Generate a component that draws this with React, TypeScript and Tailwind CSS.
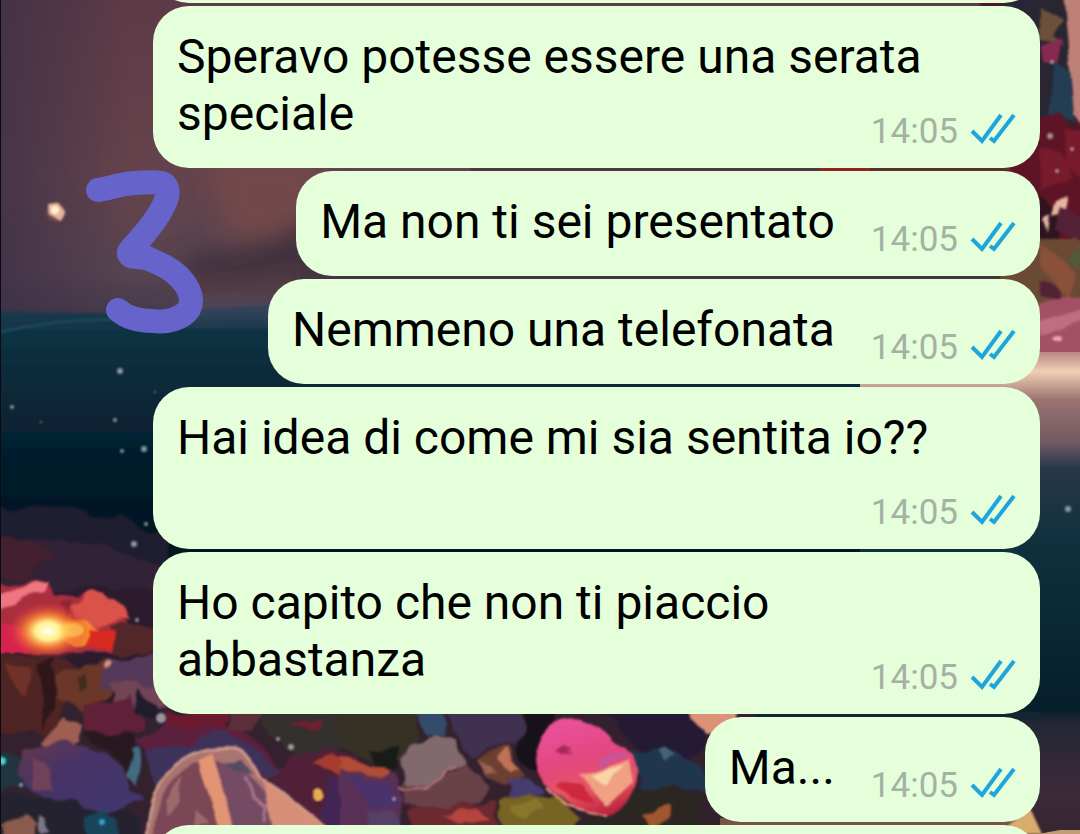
type Message = {
  id: number;
  text: string;
  time: string;
};

const messages: Message[] = [
  { id: 1, text: 'Speravo potesse essere una serata speciale', time: '14:05' },
  { id: 2, text: 'Ma non ti sei presentato', time: '14:05' },
  { id: 3, text: 'Nemmeno una telefonata', time: '14:05' },
  { id: 4, text: 'Hai idea di come mi sia sentita io??', time: '14:05' },
  { id: 5, text: 'Ho capito che non ti piaccio abbastanza', time: '14:05' },
  { id: 6, text: 'Ma...', time: '14:05' },
];

const sparkles = [
  [120, 371, 3], [12, 407, 2], [41, 422, 1], [115, 420, 2], [122, 451, 2], [144, 449, 3],
  [155, 392, 1], [146, 524, 2], [134, 544, 3], [161, 718, 5], [291, 747, 3], [278, 739, 2],
  [1050, 136, 3], [1072, 149, 2], [1057, 171, 2], [1052, 62, 2], [1068, 509, 3], [137, 620, 2],
  [21, 785, 2], [394, 799, 2],
];

function Wallpaper() {
  return (
    <svg
      className="absolute inset-0 h-full w-full"
      viewBox="0 0 1080 834"
      preserveAspectRatio="xMidYMid slice"
      aria-hidden="true"
    >
      <defs>
        <linearGradient id="sky" x1="0" y1="0" x2="0" y2="1">
          <stop offset="0" stopColor="#5e3a46" />
          <stop offset="0.55" stopColor="#65434c" />
          <stop offset="0.85" stopColor="#574450" />
          <stop offset="1" stopColor="#43394a" />
        </linearGradient>
        <linearGradient id="skyShade" x1="0" y1="0" x2="1" y2="0">
          <stop offset="0" stopColor="#3c2f45" stopOpacity="0.75" />
          <stop offset="1" stopColor="#3c2f45" stopOpacity="0" />
        </linearGradient>
        <linearGradient id="sea" x1="0" y1="0" x2="0" y2="1">
          <stop offset="0" stopColor="#203c50" />
          <stop offset="0.12" stopColor="#0c3142" />
          <stop offset="0.5" stopColor="#06202f" />
          <stop offset="1" stopColor="#030f1b" />
        </linearGradient>
        <linearGradient id="shore" x1="0" y1="0" x2="0" y2="1">
          <stop offset="0" stopColor="#b98684" />
          <stop offset="0.04" stopColor="#f0d0b4" />
          <stop offset="0.1" stopColor="#9a7370" />
          <stop offset="0.19" stopColor="#705862" />
          <stop offset="0.24" stopColor="#26384a" />
          <stop offset="0.4" stopColor="#10303e" />
          <stop offset="0.74" stopColor="#051f2b" />
          <stop offset="0.77" stopColor="#252735" />
          <stop offset="0.92" stopColor="#3c2a38" />
          <stop offset="1" stopColor="#352630" />
        </linearGradient>
        <radialGradient id="fire">
          <stop offset="0" stopColor="#fffff0" />
          <stop offset="0.3" stopColor="#fff28c" />
          <stop offset="0.55" stopColor="#ff8a35" stopOpacity="0.8" />
          <stop offset="1" stopColor="#d9203c" stopOpacity="0" />
        </radialGradient>
        <linearGradient id="gem" x1="0.3" y1="0" x2="0.6" y2="1">
          <stop offset="0" stopColor="#ea529b" />
          <stop offset="0.45" stopColor="#e3477f" />
          <stop offset="0.75" stopColor="#e85561" />
          <stop offset="1" stopColor="#be2540" />
        </linearGradient>
        <linearGradient id="leaf" x1="0" y1="0" x2="1" y2="1">
          <stop offset="0" stopColor="#65384d" />
          <stop offset="0.4" stopColor="#473366" />
          <stop offset="1" stopColor="#403870" />
        </linearGradient>
        <filter id="soft" x="-20%" y="-20%" width="140%" height="140%">
          <feGaussianBlur stdDeviation="1" />
        </filter>
        {/* uneven, painted edges */}
        <filter id="rough" x="-5%" y="-5%" width="110%" height="110%" colorInterpolationFilters="sRGB">
          <feTurbulence type="fractalNoise" baseFrequency="0.035" numOctaves="2" seed="4" result="noise" />
          <feDisplacementMap in="SourceGraphic" in2="noise" scale="20" xChannelSelector="R" yChannelSelector="G" />
          <feGaussianBlur stdDeviation="1" />
        </filter>
        <filter id="paint" x="-5%" y="-5%" width="110%" height="110%" colorInterpolationFilters="sRGB">
          <feTurbulence type="fractalNoise" baseFrequency="0.04" numOctaves="1" seed="9" result="noise" />
          <feDisplacementMap in="SourceGraphic" in2="noise" scale="8" xChannelSelector="R" yChannelSelector="G" />
          <feGaussianBlur stdDeviation="1" />
        </filter>
        <filter id="haze" x="-30%" y="-60%" width="160%" height="220%">
          <feGaussianBlur stdDeviation="12" />
        </filter>
      </defs>

      {/* sky and sea */}
      <rect width="1080" height="834" fill="#0a1d2b" />
      <rect width="1080" height="320" fill="url(#sky)" />
      <rect width="130" height="320" fill="url(#skyShade)" />
      <g filter="url(#haze)">
        <path d="M210 160h110v70l-90 10z" fill="#724a4c" />
        <path d="M180 256q50-6 90-16l50-26v86l-130 2z" fill="#3f323d" />
        <path d="M190 282q50 8 110-8v14q-60 14-110 8z" fill="#634349" />
      </g>
      <path d="M0 311q60 2 100 2t180-8h800v280H0z" fill="url(#sea)" filter="url(#soft)" />
      <path d="M170 306q60-8 130 0v12q-60-6-130 0z" fill="#50506a" filter="url(#haze)" />
      <path d="M0 332q60-14 120-12" fill="none" stroke="#1e4658" strokeWidth="3" filter="url(#soft)" />

      {/* right side */}
      <g filter="url(#paint)">
        <rect x="980" y="-10" width="110" height="370" fill="#4a1826" />
        <path d="M1006-8h60l8 133h-34l-40-90z" fill="#2a2532" />
        <path d="M1055 60l14 10 6 52-26-6z" fill="#233d54" />
        <path d="M1040 6l22 14-10 16 12 8-24-4z" fill="#6c5039" />
        <path d="M1042 46l18-8-2 24-14 2z" fill="#8a2950" />
        <path d="M1063-8h27v148l-16-26z" fill="#bd8177" />
        <path d="M1040 118l20-4 20 26h10v100h-70l-20-75z" fill="#5d1525" />
        <path d="M1040 150q28-8 32 28l-32 12zM1064 130l26-2v60l-22-22z" fill="#781b2c" />
        <path d="M1040 196l16 14 2 30-18 8z" fill="#2e1420" />
        <path d="M1056 200l12-4-4 16-12 4zM1044 218l6-4-2 18z" fill="#e4b4a0" />
        <path d="M1000 238h90v66l-50 8-40-30z" fill="#6b4a34" />
        <path d="M1042 244l34 30-6 26-30-34z" fill="#8a5039" />
        <path d="M1042 280q22 4 20 20l-22-4zM1060 206l30 14v24l-36-14z" fill="#542236" />
        <path d="M1066 262l14-16v26z" fill="#4f5b39" />
        <path d="M1030 306q26-10 60-8v66l-60-6z" fill="#a35064" />
        <path d="M1040 322l50-16v10l-50 20z" fill="#bf6d82" />
        <ellipse cx="1058" cy="338" rx="6" ry="3" fill="#f5a4ac" />
      </g>
      <rect x="860" y="352" width="220" height="482" fill="url(#shore)" />

      {/* gaps between the upper bubbles */}
      <path d="M470 163h540v12H470z" fill="#4c3a40" />
      <path d="M820 166h50v10h-50z" fill="#92241f" />
      <path d="M870 166h140v10H870z" fill="#5a302e" />
      <path d="M300 270h700v14H300z" fill="#443541" />

      {/* dark shore, left */}
      <g filter="url(#rough)">
        <path d="M-20 512q90-14 190 22v60H-20z" fill="#1f1d30" />
        <path d="M-20 538q110-6 190 34v60H-20z" fill="#322238" />
        <path d="M-20 536q60 0 74 20l-30 24-44-6z" fill="#43202d" />
        <path d="M-20 590h190v244H-20z" fill="#2c1b2c" />
        <path d="M-20 592l66-14 10 16 56 4 22 34-20 22H-20z" fill="#a92f3f" />
        <path d="M-20 600l68-22-4 12-64 26z" fill="#ef7680" />
        <path d="M66 608l24-14 26 6 14 18-42 8z" fill="#db5348" />
        <path d="M56 606l14-8-4 24z" fill="#8f2433" />
        <path d="M-20 622l50 10-4 22h-46z" fill="#d6234e" />
        <path d="M112 624h52v30h-54z" fill="#532629" />
        <ellipse cx="76" cy="634" rx="26" ry="14" fill="#f6922f" />
        <path d="M90 626l24 4-4 18-24 2z" fill="#d92a21" />
      </g>
      <ellipse cx="48" cy="631" rx="42" ry="30" fill="url(#fire)" />
      <ellipse cx="72" cy="630" rx="12" ry="7" fill="#ffd35a" fillOpacity="0.6" filter="url(#soft)" />

      {/* rocks and petals */}
      <g filter="url(#rough)">
        <rect x="-20" y="706" width="900" height="150" fill="#33212e" />
        <path d="M-20 654l80 4 28 14-36 58-72 4z" fill="#4f2424" />
        <path d="M4 666l34 6-16 22z" fill="#703129" />
        <path d="M44 664l12-6v50l-14 18z" fill="#2f1619" />
        <path d="M56 676l24-14 32 2 4 24-34 26-26-16z" fill="#6a3729" />
        <path d="M72 678l12-8 4 18-10 8z" fill="#3f2c1c" />
        <path d="M104 662l60-8 10 50-38 6-36-26z" fill="#56395a" />
        <path d="M110 680l44 8 16 20-60-6z" fill="#724454" />
        <ellipse cx="108" cy="667" rx="5" ry="3" fill="#cf987e" />
        <path d="M84 706l50-8 12 30-48 14-16-16z" fill="#602138" />
        <path d="M140 690l14 12 4 18-18-6z" fill="#211c2d" />
        <path d="M48 728l18-12 15 8-3 18-16 8-22-8z" fill="#9c5f52" />
        <path d="M82 732l50 4 6 36-44-30z" fill="#27191f" />
        <path d="M-20 744l50 20v20l-50 6z" fill="#203540" />
        <path d="M-20 790l90 6 70 18v40H-20z" fill="#25222f" />
        <path d="M24 752l26-12 40 6 32 18 22 36-30 14-58-14-38-24z" fill="url(#leaf)" />
        <path d="M34 758l12 6 8 26-20-6z" fill="#704259" />
        <path d="M2 824l20-10 16 10v30H2z" fill="#8a5b4c" />
        <path d="M38 812l10 6 4 16-10 2z" fill="#7a7584" />
        <path d="M84 814l20-6 14 16-6 30H84z" fill="#19455a" />
        <path d="M134 740l52-22 60 12 36 38-42 26-80-20z" fill="#5c203f" />
        <path d="M144 756l84-26 66 48-74-10-60 24z" fill="#3e325b" />
        <path d="M130 754l8-6 2 34-12-8z" fill="#426c82" />
        <path d="M164 712h68l-6 18-60-4z" fill="#6b192d" />
        <path d="M232 708h36l-12 24-24-4z" fill="#5b3039" />
        <path d="M262 704h98v42l-52 10-40-20z" fill="#34302e" />
        <path d="M286 718l32 2-6 14z" fill="#701f30" />
        <path d="M270 774l40-28 48 10 2 80-60-10z" fill="#502038" />
        <path d="M316 762l16-8 28 16-4 12-24-8z" fill="#a73b30" />
        <path d="M326 782q26-10 30 8l-6 36-30-10z" fill="#422554" />
      </g>
      <ellipse cx="318" cy="794" rx="6" ry="7" fill="#e6ad50" filter="url(#paint)" />

      {/* big shell */}
      <g filter="url(#paint)">
        <path d="M147 840q2-62 36-80 22-14 52-11 14 4 26 30 30 18 72 55v8z" fill="#a97370" />
        <path d="M154 840q0-52 36-74l12-4 18 26 10 54z" fill="#7b4655" />
        <path d="M166 800l16-24-2 26-14 14zM196 808l14 14-16 4z" fill="#9d6a6c" />
        <path d="M197 763l16-10 12 32 12 57h-14z" fill="#e39474" />
        <path d="M216 760l24 4 24 28 12 50h-38z" fill="#744b63" />
        <path d="M224 764l16-4 14 14-20-4z" fill="#534c63" />
        <path d="M244 776l10 22 12 8-2 16" fill="none" stroke="#a97688" strokeWidth="3" />
        <path d="M263 782q28 14 68 52l-56 4z" fill="#d88f78" />
        <path d="M147 840q2-62 36-80 22-14 52-11 14 4 26 30 30 18 72 55" fill="none" stroke="#cf9a88" strokeWidth="3" />
      </g>

      {/* pebbles along the bottom */}
      <g filter="url(#rough)">
        <path d="M340 706h72l8 48-36 12-44-20z" fill="#363125" />
        <path d="M410 706h36l6 30-26-2z" fill="#344c69" />
        <path d="M446 704h86l-16 40-50 10z" fill="#413150" />
        <path d="M372 750l28-6-2 24-22 2z" fill="#191b17" />
        <path d="M340 762l52 10 14 28-16 44h-50z" fill="#5a3057" />
        <path d="M336 756l50 14-8 6-42-8z" fill="#b24c36" />
        <path d="M354 776l34 6 12 24-34 4z" fill="#4b326b" />
        <path d="M402 758l12-14 24-10 18 6 4 24-20 22-24 4-10-8z" fill="#82696e" />
        <path d="M404 782q38 14 56-18l20 12 12 18-42 18-42-8z" fill="#684149" />
        <path d="M400 788q40 8 56-22" fill="none" stroke="#b7777c" strokeWidth="2" />
        <path d="M474 754l36-6 16 24-24 18-18-14z" fill="#6d3e32" />
        <path d="M496 758l10-8 16 18-12 4z" fill="#bf7354" />
        <path d="M472 756l20 10 8 10-14-2z" fill="#9b6153" />
        <path d="M504 782l22-6 18 16-34 8z" fill="#453d70" />
        <path d="M410 808l88-6 2 44h-92z" fill="#6b2930" />
        <path d="M440 816l36-8 18 12-34 4z" fill="#b4443d" />
        <path d="M370 812l26-2 10 36h-44z" fill="#564066" />
        <path d="M502 802l24-8 34 4 20 16-16 30h-64z" fill="#776323" />
        <path d="M512 804l24-6 8 14-22 6z" fill="#8a752c" />
        <path d="M524 706h34l-14 40v36l-24-30z" fill="#171219" />
        <path d="M592 706h92l24 28-14 26-52-10z" fill="#251a34" />
        <path d="M628 748l44 6 46 16-6 18-72 4z" fill="#20364d" />
        <path d="M656 754l8-4 14 10-14 6z" fill="#456378" />
        <path d="M686 706h50v26l-32 2z" fill="#dc9277" />
        <path d="M634 786l84 8v50H580l12-30z" fill="#2c2622" />
        <path d="M642 816l32-8-4 14-20 8z" fill="#a0562f" />
        <path d="M706 736l12 8v84h-18z" fill="#33202b" />
      </g>

      {/* pink gem */}
      <g filter="url(#paint)">
        <path d="M534 758q6-40 38-40 22 0 42 24 24 8 22 36-4 30-28 36-22 2-46-16-28-16-28-40z" fill="url(#gem)" />
        <path d="M578 774q24 0 50-14l4 22-26 24-16-18z" fill="#f0a083" />
        <path d="M590 776l34-10-18 22z" fill="#f9d5a5" />
        <path d="M562 782l18 2 16 18-24-4-16-12z" fill="#ce283f" />
        <path d="M556 752l8-6 8 4-6 2 8 2-12 2z" fill="#a5285b" />
        <path d="M602 756l20-4 6 6-18 4-4 8-6-2z" fill="#c85498" />
        <path d="M546 788l18 16 26 8 18 2" fill="none" stroke="#f0988c" strokeWidth="2" />
      </g>

      {/* sand at the bottom right */}
      <path d="M756 712h284v8H756z" fill="#142431" />
      <path d="M720 818h300v10H720z" fill="#765348" />
      <path d="M1010 824l20-16 12 26h-40z" fill="#d8ac6c" filter="url(#soft)" />
      <path d="M1038 834l22-4h20v4z" fill="#c39b75" />

      {/* small lights */}
      <g filter="url(#soft)">
        <circle cx="56" cy="212" r="10" fill="#6e4848" />
        <path d="M48 204l10-1 7 9-4 9-12-7z" fill="#e6b39b" />
        <circle cx="55" cy="210" r="4" fill="#fff0d7" />
        {sparkles.map(([x, y, r]) => (
          <circle key={`${x}-${y}`} cx={x} cy={y} r={r} fill="#b9bcc4" fillOpacity="0.75" />
        ))}
        <circle cx="2" cy="761" r="4" fill="#42d2cf" />
        <circle cx="102" cy="822" r="3" fill="#37a2cb" />
      </g>
      <rect width="1" height="834" fill="#0b0a10" />
    </svg>
  );
}

// number drawn by hand over the chat
function HandwrittenThree() {
  return (
    <svg
      className="absolute top-[168px] left-[82px] h-[170px] w-[126px]"
      viewBox="82 168 126 170"
      role="img"
      aria-label="3"
    >
      <path
        d="M98 190C108 189 119 184 134 183C146 182 155 182 161 183C168 184 169 193 166 200C160 217 144 235 132 248C127 253 128 257 137 257L147 258C160 264 173 269 181 279C189 288 194 299 189 309C182 319 166 323 153 321C139 321 126 317 118 310"
        fill="none"
        stroke="#6664ca"
        strokeWidth="24"
        strokeLinecap="round"
        strokeLinejoin="round"
      />
    </svg>
  );
}

function ReadTicks() {
  return (
    <svg
      className="mb-1 h-8 w-[46px] overflow-visible"
      viewBox="0 0 46 32"
      fill="none"
      stroke="#1ea5dc"
      strokeWidth="4"
      role="img"
      aria-label="Letto"
    >
      <path d="M2 17L12 27L31 1" />
      <path d="M20 24L24 27L44 1" />
    </svg>
  );
}

function Bubble({ message }: { message: Message }) {
  return (
    <li className="flow-root rounded-[36px] bg-[#e5ffdb] px-6 pt-[22px] pb-[26px] text-[48px] leading-[57px] text-black">
      {message.text}
      <span className="float-right mt-9 flex h-[21px] items-center gap-3 pl-9 text-[35px] leading-[21px] text-[#a6b1a4]">
        <time>{message.time}</time>
        <ReadTicks />
      </span>
    </li>
  );
}

export default function App() {
  return (
    <main className="relative h-screen overflow-hidden bg-[#0a1d2b] font-['Roboto',sans-serif]">
      <Wallpaper />
      <ul className="relative -mt-[102px] flex flex-col items-end gap-[3px] pr-10 pl-[153px]">
        {/* neighbours scrolled out of view */}
        <li className="h-[105px] w-full rounded-[36px] bg-[#e5ffdb]" />
        {messages.map((message) => (
          <Bubble key={message.id} message={message} />
        ))}
        <li className="h-[105px] w-full rounded-[36px] bg-[#e5ffdb]" />
      </ul>
      <HandwrittenThree />
    </main>
  );
}
